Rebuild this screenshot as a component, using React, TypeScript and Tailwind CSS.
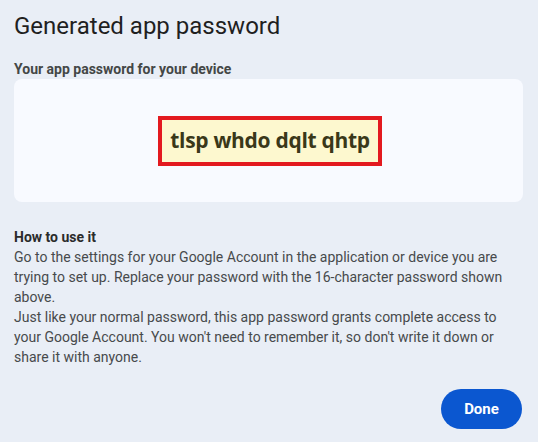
export default function App() {
  return (
    <main className="w-[538px] h-[442px] bg-[#e9eef6] pl-[14px] pt-[10px] font-['Roboto',sans-serif] text-[#1f1f1f] overflow-hidden">
      {/* Header */}
      <h1 className="text-[24px] leading-[32px] font-normal text-[#1f1f1f]">Generated app password</h1>

      {/* Password card */}
      <p className="mt-[17px] text-[14px] leading-[20px] font-bold text-[#444746]">Your app password for your device</p>
      <div className="w-[509px] h-[123px] bg-[#f8faff] rounded-[8px] flex items-center justify-center">
        <div className="ml-[3px] w-[224px] h-[50px] border-[4px] border-[#e3191f] bg-[#fdf8cf] flex items-center justify-center">
          <span className="font-['Open_Sans',sans-serif] text-[21px] font-bold text-[#3a3819] tracking-[-0.3px]">tlsp whdo dqlt qhtp</span>
        </div>
      </div>

      {/* Instructions */}
      <div className="mt-[25px] text-[14px] leading-[20px] text-[#474a4c]">
        <p className="font-bold text-[#2b2b2b]">How to use it</p>
        <p>
          Go to the settings for your Google Account in the application or device you are
          <br />
          trying to set up. Replace your password with the 16-character password shown
          <br />
          above.
        </p>
        <p>
          Just like your normal password, this app password grants complete access to
          <br />
          your Google Account. You won't need to remember it, so don't write it down or
          <br />
          share it with anyone.
        </p>
      </div>

      <div className="w-[508px] flex justify-end mt-[22px]">
        <button className="w-[81px] h-[40px] rounded-full bg-[#0b57d0] text-white text-[15px] font-bold">Done</button>
      </div>
    </main>
  )
}
